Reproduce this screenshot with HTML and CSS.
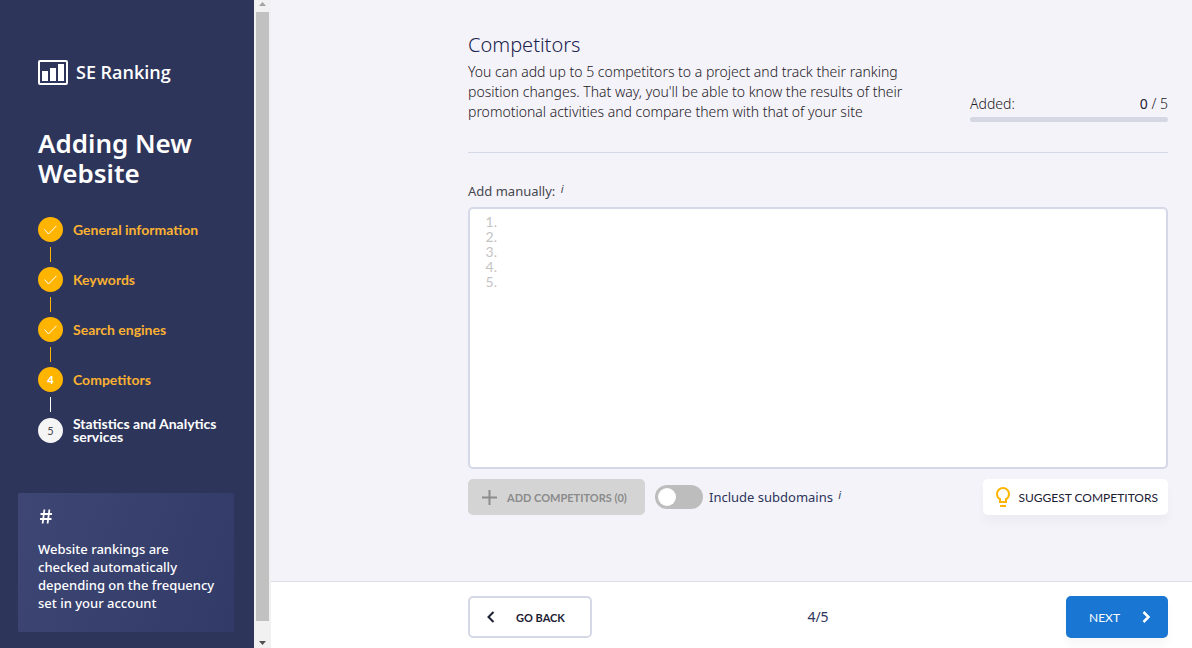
FILE: index.html
```html
<!DOCTYPE html>
<html lang="en">
<head>
    <meta charset="UTF-8">
    <meta name="viewport" content="width=device-width, initial-scale=1.0">
    <title>SE Ranking - Adding New Website</title>
    <link rel="stylesheet" href="styles.css">
</head>
<body>
    <!-- Sidebar -->
    <aside class="sidebar">
        <a class="logo" href="#">
            <svg width="30" height="25" viewBox="0 0 30 25" fill="#fff">
                <rect x="1" y="1" width="28" height="23" rx="1" fill="none" stroke="#fff" stroke-width="2"/>
                <rect x="4" y="11" width="6" height="10"/>
                <rect x="12" y="8" width="6" height="13"/>
                <rect x="20" y="4" width="6" height="17"/>
            </svg>
            <span>SE Ranking</span>
        </a>
        <h1>Adding New Website</h1>

        <ol class="steps">
            <li class="step done">
                <span class="step-mark"><svg width="13" height="10" viewBox="0 0 13 10"><path d="M.5 4.5L4.5 9L12.5.8"/></svg></span>
                <a href="#">General information</a>
            </li>
            <li class="step done">
                <span class="step-mark"><svg width="13" height="10" viewBox="0 0 13 10"><path d="M.5 4.5L4.5 9L12.5.8"/></svg></span>
                <a href="#">Keywords</a>
            </li>
            <li class="step done">
                <span class="step-mark"><svg width="13" height="10" viewBox="0 0 13 10"><path d="M.5 4.5L4.5 9L12.5.8"/></svg></span>
                <a href="#">Search engines</a>
            </li>
            <li class="step current">
                <span class="step-mark">4</span>
                <a href="#">Competitors</a>
            </li>
            <li class="step">
                <span class="step-mark">5</span>
                <a href="#">Statistics and Analytics services</a>
            </li>
        </ol>

        <div class="tip">
            <svg width="14" height="15" viewBox="0 0 14 15" fill="none" stroke="#fff" stroke-width="1.8">
                <path d="M6.400 .5L4.600 14.5M11.400 .5L9.600 14.5M2.500 5H14M2 10H13.500"/>
            </svg>
            <p>Website rankings are checked automatically depending on the frequency set in your account</p>
        </div>
    </aside>

    <!-- Sidebar scrollbar -->
    <div class="scrollbar">
        <svg width="7" height="4" viewBox="0 0 7 4"><path d="M0 4L3.5 0L7 4z" fill="#a3a3a3"/></svg>
        <div class="scrollbar-thumb"></div>
        <svg width="7" height="4" viewBox="0 0 7 4"><path d="M0 0L3.5 4L7 0z" fill="#505050"/></svg>
    </div>

    <!-- Page -->
    <div class="page">
        <main>
            <header class="intro">
                <div class="intro-text">
                    <h2>Competitors</h2>
                    <p>You can add up to 5 competitors to a project and track their ranking position changes. That way, you'll be able to know the results of their promotional activities and compare them with that of your site</p>
                </div>
                <div class="added">
                    <div class="added-row">
                        <span>Added:</span>
                        <span><b>0</b> / 5</span>
                    </div>
                    <div class="added-bar"></div>
                </div>
            </header>

            <form class="competitors">
                <label class="manual-label" for="manual">Add manually: <i class="info">i</i></label>
                <div class="manual">
                    <ol>
                        <li>1.</li>
                        <li>2.</li>
                        <li>3.</li>
                        <li>4.</li>
                        <li>5.</li>
                    </ol>
                    <textarea id="manual"></textarea>
                </div>

                <div class="actions">
                    <button class="btn btn-add" type="button" disabled>
                        <svg width="15" height="15" viewBox="0 0 15 15"><path d="M7.5 0V15M0 7.5H15" stroke="#8b8b8b" stroke-width="2"/></svg>
                        ADD COMPETITORS (0)
                    </button>
                    <input class="toggle" type="checkbox" id="subdomains">
                    <label class="toggle-label" for="subdomains">Include subdomains <i class="info">i</i></label>
                    <button class="btn btn-suggest" type="button">
                        <svg width="14" height="20" viewBox="0 0 14 20" fill="none" stroke="#ffb400" stroke-width="2">
                            <path d="M4 15V12.2C2.200 11.200 1 9.300 1 7A6 6 0 0 1 13 7C13 9.300 11.800 11.200 10 12.200V15Z"/>
                            <path d="M4 19H10"/>
                        </svg>
                        SUGGEST COMPETITORS
                    </button>
                </div>
            </form>
        </main>

        <footer>
            <div class="footer-inner">
                <button class="btn btn-back" type="button">
                    <svg width="8" height="12" viewBox="0 0 8 12"><path d="M6.500 1L1.500 6L6.500 11" fill="none" stroke="#1c2033" stroke-width="2"/></svg>
                    GO BACK
                </button>
                <span class="page-count">4/5</span>
                <button class="btn btn-next" type="button">
                    NEXT
                    <svg width="9" height="12" viewBox="0 0 9 12"><path d="M1.500 1L6.500 6L1.500 11" fill="none" stroke="#fff" stroke-width="2.500"/></svg>
                </button>
            </div>
        </footer>
    </div>
</body>
</html>
```

FILE: styles.css
```css
* {
    margin: 0;
    padding: 0;
    box-sizing: border-box;
}
body {
    display: flex;
    min-height: 100vh;
    background-color: #f4f3f9;
    color: #46484f;
    font-family: "Noto Sans", "Open Sans", sans-serif;
    font-size: 13px;
    line-height: 20px;
}
a {
    color: inherit;
    text-decoration: none;
}
ol {
    list-style: none;
}
button, textarea {
    font-family: inherit;
}
svg {
    flex: none;
}
/* Sidebar */
.sidebar {
    flex: none;
    width: 254px;
    padding: 60px 20px 16px 18px;
    background-color: #2d355b;
    color: #fff;
}
.logo {
    display: flex;
    align-items: center;
    gap: 8px;
    height: 24px;
    margin-left: 20px;
    font-family: "Open Sans", sans-serif;
    font-size: 18px;
    font-weight: 600;
}
.sidebar h1 {
    margin: 44px 16px 0 20px;
    font-size: 26px;
    font-weight: 600;
    line-height: 30px;
}
.steps {
    margin: 29px 0 0 20px;
}
.step {
    display: flex;
    align-items: center;
    gap: 10px;
    font-family: Lato, sans-serif;
    font-size: 14px;
    font-weight: 700;
    line-height: 13px;
}
.step-mark {
    display: flex;
    flex: none;
    align-items: center;
    justify-content: center;
    width: 25px;
    height: 25px;
    border-radius: 50%;
    background-color: #f5f5f5;
    color: #46484f;
    font-size: 11px;
    font-weight: 400;
}
.step-mark path {
    fill: none;
    stroke: #fff;
}
.step.done, .step.current {
    flex-wrap: wrap;
    color: #fbb130;
}
.step.done .step-mark, .step.current .step-mark {
    background-color: #ffb400;
    color: #fff;
    font-weight: 900;
}
/* Line down to the next step */
.step.done::after, .step.current::after {
    content: "";
    flex: none;
    width: 1px;
    height: 15px;
    margin: -5px 150px 5px 12px;
    background-color: #ffb400;
}
.step.current::after {
    background-color: #fff;
}
.tip {
    margin-top: 50px;
    padding: 16px 18px 20px 20px;
    border-radius: 2px;
    background: linear-gradient(110deg, #3e4673, #323a68);
    font-weight: 500;
    line-height: 18px;
}
.tip svg {
    display: block;
    margin-bottom: 16px;
}
/* Scrollbar */
.scrollbar {
    display: flex;
    flex: none;
    flex-direction: column;
    align-items: center;
    gap: 6px;
    width: 17px;
    padding: 2px 0 3px;
    background-color: #f1f1f1;
}
.scrollbar-thumb {
    flex: 1;
    width: 13px;
    margin-bottom: 14px;
    background-color: #c1c1c1;
}
/* Page */
.page {
    display: flex;
    flex: 1;
    flex-direction: column;
}
main {
    flex: 1;
    width: 100%;
    max-width: 748px;
    margin-left: auto;
    padding: 32px 24px 0;
}
.intro {
    display: flex;
    align-items: flex-end;
    justify-content: space-between;
    padding-bottom: 30px;
    border-bottom: 1px solid #d5d8e6;
    color: #1e2026;
    font-size: 14px;
    font-weight: 300;
}
.intro-text {
    width: 445px;
}
.intro h2 {
    margin-bottom: 4px;
    color: #1c2450;
    font-size: 20px;
    font-weight: 300;
    line-height: 26px;
}
.added {
    width: 198px;
}
.added-row {
    display: flex;
    justify-content: space-between;
    margin-bottom: 3px;
}
.added-row b {
    color: #1c2033;
    font-weight: 400;
}
.added-bar {
    height: 5px;
    border-radius: 3px;
    background-color: #d5d8e3;
}
/* Competitors form */
.manual-label {
    display: block;
    margin-top: 28px;
    margin-bottom: 6px;
}
.info {
    margin-left: 2px;
    font-size: 11px;
    line-height: 1;
    vertical-align: 3px;
}
.manual {
    display: flex;
    height: 262px;
    padding: 5px 8px;
    border: 2px solid #d5d8e6;
    border-radius: 5px;
    background-color: #fff;
    font-family: Lato, sans-serif;
    font-size: 14px;
    line-height: 15px;
}
.manual ol {
    width: 19px;
    color: #c4c4c4;
    text-align: right;
}
.manual textarea {
    flex: 1;
    margin-left: 6px;
    border: none;
    outline: none;
    background: none;
    font-size: 14px;
    line-height: 15px;
    resize: none;
}
.actions {
    display: flex;
    align-items: center;
    margin-top: 10px;
}
.btn {
    display: flex;
    align-items: center;
    height: 36px;
    border: none;
    border-radius: 5px;
    background-color: #fff;
    color: #1c2033;
    font-family: Lato, sans-serif;
    font-size: 11px;
    font-weight: 700;
    white-space: nowrap;
    cursor: pointer;
}
.btn-add {
    gap: 10px;
    min-width: 177px;
    padding: 0 14px;
    background-color: #d4d4d4;
    color: #8b8b8b;
    cursor: default;
}
.toggle {
    appearance: none;
    width: 48px;
    height: 24px;
    margin: 0 6px 0 10px;
    padding: 3px;
    border-radius: 12px;
    background-color: #bdbdbd;
}
.toggle::before {
    content: "";
    display: block;
    width: 18px;
    height: 18px;
    border-radius: 50%;
    background-color: #fff;
}
.toggle:checked {
    background-color: #1976d2;
}
.toggle:checked::before {
    margin-left: 24px;
}
.toggle-label {
    color: #2d355b;
}
.btn-suggest {
    gap: 8px;
    margin-left: auto;
    padding: 0 10px 0 13px;
    box-shadow: 0 8px 8px rgba(0, 0, 0, 0.03);
    font-size: 12px;
    font-weight: 400;
}
/* Footer */
footer {
    border-top: 1px solid #dcdde3;
    background-color: #fff;
}
.footer-inner {
    display: grid;
    grid-template-columns: 1fr auto 1fr;
    align-items: center;
    max-width: 748px;
    margin-left: auto;
    padding: 14px 24px 10px;
}
.btn-back, .btn-next {
    height: 42px;
}
.btn-back {
    gap: 21px;
    width: 124px;
    padding: 0 17px;
    border: 2px solid #d5d8e6;
}
.page-count {
    color: #2d355b;
    font-size: 14px;
}
.btn-next {
    justify-content: space-between;
    justify-self: end;
    width: 102px;
    padding: 0 17px 0 23px;
    background-color: #1976d2;
    color: #fff;
    box-shadow: 0 8px 8px rgba(0, 0, 0, 0.03);
    font-size: 12px;
    font-weight: 400;
}
```
